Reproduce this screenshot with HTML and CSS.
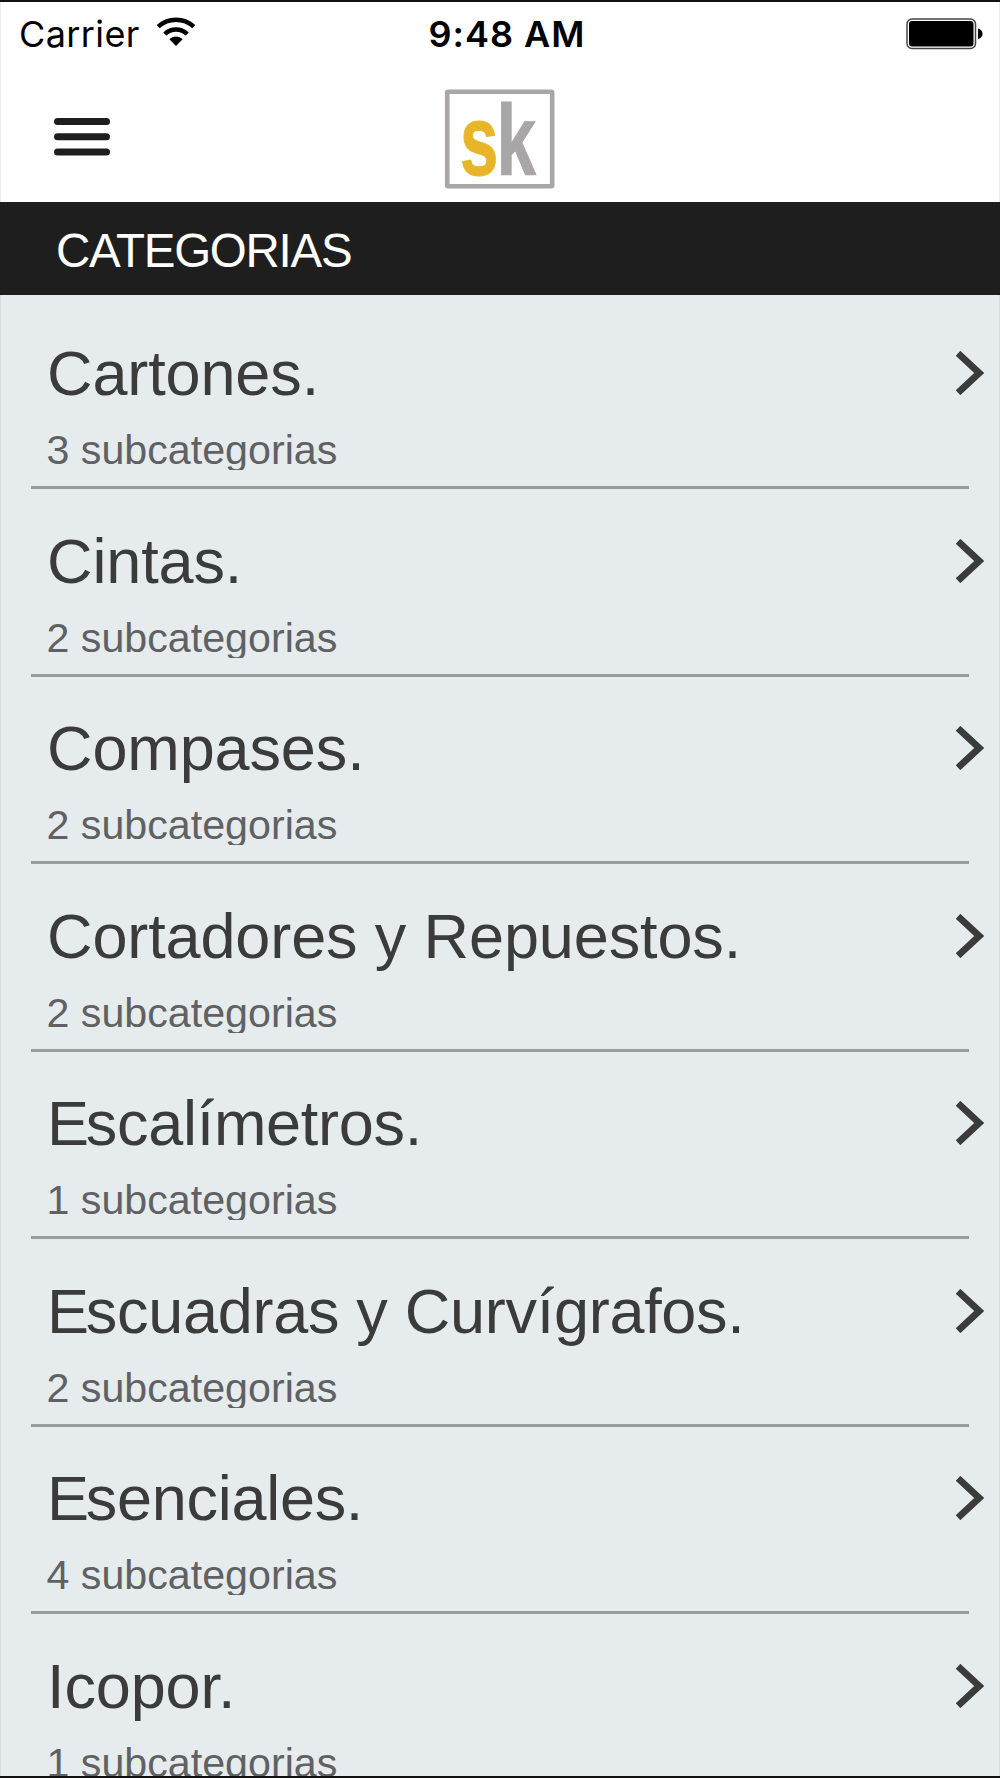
FILE: index.html
```html
<!DOCTYPE html>
<html lang="es">
<head>
<meta charset="utf-8">
<title>Categorias</title>
<link rel="stylesheet" href="styles.css">
</head>
<body>
<svg class="defs" width="0" height="0" aria-hidden="true">
  <symbol id="chevron" viewBox="0 0 28 44"><path d="M2 2.3 23.2 22 2 41.7" fill="none" stroke="#3b3b3b" stroke-width="6.8"/></symbol>
</svg>
<div class="screen">
  <header class="top">
    <div class="status">
      <div class="carrier"><span>Carrier</span>
        <svg class="wifi" width="40" height="30" viewBox="0 0 40 30">
          <path d="M2.2 9.6C12.5.4 27.5.4 37.8 9.6" fill="none" stroke="#000" stroke-width="4.4"/>
          <path d="M8.8 17C15.2 11 24.8 11 31.2 17" fill="none" stroke="#000" stroke-width="4.4"/>
          <path d="M13.4 22.2C17 18.6 23 18.6 26.6 22.2L20 29Z"/>
        </svg>
      </div>
      <div class="time">9:48 AM</div>
      <svg class="battery" width="78" height="32" viewBox="0 0 78 32">
        <rect x="1" y="1" width="68.5" height="29.5" rx="5" fill="#fff" stroke="#444" stroke-width="1.5"/>
        <rect x="3" y="3" width="64.5" height="25.5" rx="3"/>
        <path d="M72 10.5C78 11.5 78 20 72 21Z"/>
      </svg>
    </div>
    <div class="nav">
      <svg class="menu" width="58" height="40" viewBox="0 0 58 40">
        <g fill="#1e1e1e"><rect x="1" y="1" width="56" height="7" rx="3.5"/><rect x="1" y="16.3" width="56" height="7" rx="3.5"/><rect x="1" y="31.6" width="56" height="7" rx="3.5"/></g>
      </svg>
      <svg class="logo" width="110" height="100" viewBox="0 0 110 100">
        <rect x="2.2" y="2.7" width="105" height="94.5" rx="1" fill="#fff" stroke="#a8a6a7" stroke-width="4.6"/>
        <text class="logo-letter logo-s" transform="translate(15 86) scale(.69 1)">s</text>
        <text class="logo-letter logo-k" transform="translate(51.5 86.3) scale(.71 1)">k</text>
      </svg>
    </div>
  </header>
  <h1 class="heading">CATEGORIAS</h1>
  <ul class="list">
    <li class="row"><div class="label"><div class="name">Cartones.</div><div class="count">3 subcategorias</div></div><svg class="chevron"><use href="#chevron"/></svg></li>
    <li class="row"><div class="label"><div class="name">Cintas.</div><div class="count">2 subcategorias</div></div><svg class="chevron"><use href="#chevron"/></svg></li>
    <li class="row"><div class="label"><div class="name">Compases.</div><div class="count">2 subcategorias</div></div><svg class="chevron"><use href="#chevron"/></svg></li>
    <li class="row"><div class="label"><div class="name">Cortadores y Repuestos.</div><div class="count">2 subcategorias</div></div><svg class="chevron"><use href="#chevron"/></svg></li>
    <li class="row"><div class="label"><div class="name name-tight">Escalímetros.</div><div class="count">1 subcategorias</div></div><svg class="chevron"><use href="#chevron"/></svg></li>
    <li class="row"><div class="label"><div class="name name-tight">Escuadras y Curvígrafos.</div><div class="count">2 subcategorias</div></div><svg class="chevron"><use href="#chevron"/></svg></li>
    <li class="row"><div class="label"><div class="name name-tight">Esenciales.</div><div class="count">4 subcategorias</div></div><svg class="chevron"><use href="#chevron"/></svg></li>
    <li class="row"><div class="label"><div class="name">Icopor.</div><div class="count">1 subcategorias</div></div><svg class="chevron"><use href="#chevron"/></svg></li>
  </ul>
</div>
</body>
</html>
```
FILE: styles.css
```css
* { box-sizing: border-box; }
body { margin: 0; font-family: "Liberation Sans", Arial, sans-serif; }
.defs { display: block; }
.screen {
  width: 1000px;
  height: 1778px;
  overflow: hidden;
  display: flex;
  flex-direction: column;
  background: #e6ecee;
  border-top: 2px solid #111;
  border-bottom: 2px solid #111;
}
.top {
  flex: none;
  height: 200px;
  background: #fff;
  border-left: 1px solid #ededed;
  border-right: 1px solid #ededed;
}
.status {
  display: grid;
  grid-template-columns: 1fr auto 1fr;
  align-items: center;
  height: 64px;
  padding: 0 15px 0 18px;
  font: 36px/64px Inter, sans-serif;
  color: #000;
}
.carrier { display: flex; align-items: center; gap: 16px; letter-spacing: 0.4px; }
.wifi { margin-bottom: 4px; }
.time { font-weight: 600; letter-spacing: 1px; padding-left: 11px; }
.battery { justify-self: end; }
.nav {
  display: grid;
  grid-template-columns: 1fr auto 1fr;
  height: 136px;
  padding: 23px 52px 0;
}
.menu { margin-top: 28px; }
.logo-letter { font: bold 100px "Liberation Sans", Arial, sans-serif; }
.logo-s { fill: #e9b528; stroke: #e9b528; }
.logo-k { fill: #a8a6a7; stroke: #a8a6a7; }
.logo { overflow: visible; }
.heading {
  flex: none;
  margin: 0;
  height: 93px;
  padding-left: 56px;
  background: #1e1e1e;
  color: #fff;
  font-size: 47.5px;
  font-weight: 400;
  line-height: 97px;
  letter-spacing: -1.25px;
}
.list {
  flex: none;
  margin: 0;
  padding: 6.5px 0 0;
  list-style: none;
  border-left: 1px solid #d9dddf;
  border-right: 1px solid #d9dddf;
}
.row {
  height: 187.5px;
  margin: 0 30px;
  padding: 33.5px 0 0 15px;
  display: flex;
  justify-content: space-between;
  border-bottom: 3px solid #999b9c;
}
.name {
  height: 76px;
  padding-left: 1px;
  font-size: 63px;
  line-height: 76px;
  letter-spacing: -0.12px;
  color: #3b3b3b;
  white-space: nowrap;
}
.name-tight { letter-spacing: -0.28px; }
.name-tight::first-letter { margin-right: -3px; }
.count {
  height: 59px;
  padding-left: 0.5px;
  overflow: hidden;
  font-size: 41.2px;
  line-height: 79.5px;
  color: #606162;
}
.chevron { flex: none; width: 28px; height: 44px; margin: 16px -15px 0 0; }
```
